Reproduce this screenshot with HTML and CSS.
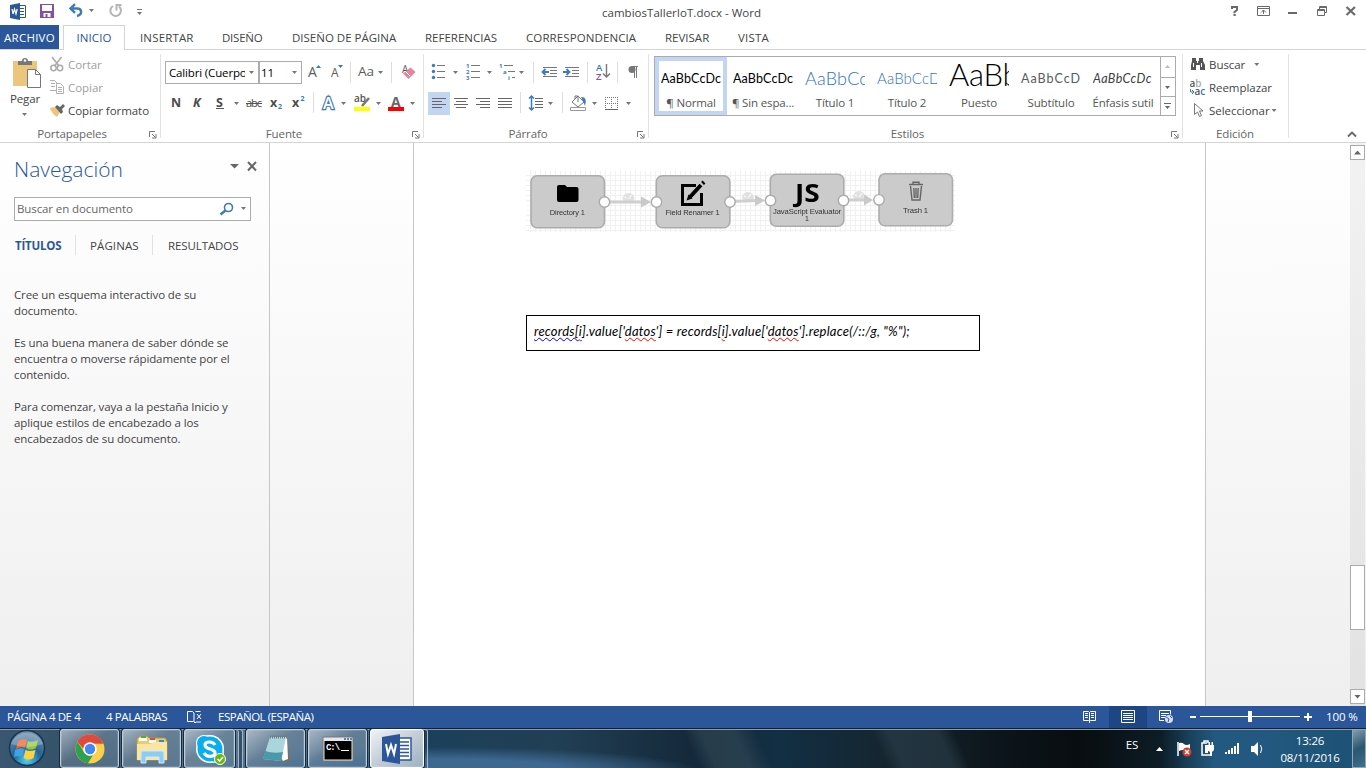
FILE: index.html
```html
<!DOCTYPE html>
<html lang="es">
<head>
<meta charset="utf-8">
<title>cambiosTallerIoT.docx - Word</title>
<link rel="stylesheet" href="styles.css">
</head>
<body>
<header class="titlebar">
  <svg class="quick" width="150" height="25" viewBox="0 0 150 25">
    <path fill="#2b579a" d="M10 5l10-2v17l-10-2z"/><path fill="none" stroke="#2b579a" d="M20 5.500h5.500v12H20M20 8.500h4M20 11.500h4M20 14.500h4"/><path fill="none" stroke="#fff" stroke-width="1.200" d="M12 9l1 5 1.500-5L16 14l1.200-5"/>
    <path fill="#8551a5" d="M40 4h14v14H40z"/><path fill="#fff" d="M42 5h10v6H42zM43.500 13h7v4h-3v-3h-2v3h-2z"/>
    <path fill="none" stroke="#3e79b8" stroke-width="2.400" d="M71 8.500h6c5 0 6 6 0 7.500M75 4.200L70.500 8.500l4.500 4.300"/>
    <path fill="#777" d="M89 9h5l-2.500 3zM137 12h5l-2.500 3z"/><path stroke="#777" d="M137 9.500h5"/>
    <path fill="none" stroke="#b4b4b4" stroke-width="2" d="M113 6a5.300 5.300 0 1 0 6 .5M116.500 10.500V5h5"/>
  </svg>
  <h1 class="doc-title">cambiosTallerIoT.docx - Word</h1>
  <svg class="winbtns" width="146" height="25" viewBox="1220 0 146 25">
    <path fill="none" stroke="#6a6a6a" stroke-width="2" d="M1232 9V7h5v3l-2.500 2v1.200M1233.500 15h2.200"/>
    <path fill="none" stroke="#6a6a6a" d="M1257.500 6.500h12v9h-12zM1257 8.500h13M1263.500 14v-4M1261 12.500l2.500-2.500 2.500 2.500"/>
    <path stroke="#6a6a6a" stroke-width="2" d="M1288 13h9"/>
    <path fill="none" stroke="#6a6a6a" d="M1317.500 9.500h7v6h-7zM1317 10.500h8M1319.500 9V6.500h7v6H1325M1319 7.500h8"/>
    <path stroke="#6a6a6a" stroke-width="2.200" d="M1346.500 7l8.500 8M1355 7l-8.500 8"/>
  </svg>
</header>
<nav class="tabs">
  <span class="tab file">ARCHIVO</span><span class="tab active">INICIO</span><span class="tab t1">INSERTAR</span><span class="tab t2">DISEÑO</span><span class="tab t3">DISEÑO DE PÁGINA</span><span class="tab t4">REFERENCIAS</span><span class="tab t5">CORRESPONDENCIA</span><span class="tab t6">REVISAR</span><span class="tab t7">VISTA</span>
</nav>
<section class="ribbon">
  <div class="group clip">
    <div class="gbody">
      <div class="paste">
        <svg width="50" height="42" viewBox="0 50 50 42"><path fill="#edc67e" d="M13 61h24v25H13z"/><path fill="#777" d="M18 65v-4h4a3 3 0 0 1 6 0h4v4z"/><circle cx="25" cy="60.500" r="1.200" fill="#fff"/><path fill="#fff" stroke="#777" d="M27.500 69.500h8l5 5v13h-13z"/><path fill="none" stroke="#777" d="M35.500 69.500v5h5"/></svg>
        <span>Pegar</span>
        <svg width="50" height="12" viewBox="0 106 50 12"><path fill="#777" d="M22 113h5l-2.500 3z"/></svg>
      </div>
      <div class="stack">
        <div class="cmd dim"><svg width="18" height="22" viewBox="50 54 18 22"><g fill="none" stroke="#aaa" stroke-width="1.500"><circle cx="53.500" cy="68" r="2.700"/><circle cx="60" cy="68" r="2.700"/><path d="M52 57l7 9M61.500 57l-7 9"/></g></svg><span>Cortar</span></div>
        <div class="cmd dim"><svg width="18" height="22" viewBox="50 77 18 22"><path fill="none" stroke="#b0b0b0" d="M56 90.500h-6.500v-10h5l3 3M51 83.500h4M51 86.500h4"/><path fill="#fff" stroke="#b0b0b0" d="M56.500 83.500h4l3 3v7h-7zM58 87.500h4M58 89.500h4M58 91.500h4"/></svg><span>Copiar</span></div>
        <div class="cmd"><svg width="18" height="22" viewBox="50 100 18 22"><path fill="#edc67e" d="M50 108l5-1 5 5-3 5c-2-1-6-5-7-9z"/><path fill="#666" d="M55 107l2-2 3 2 3-3 2 2-3 3 1 3-2 2z"/></svg><span>Copiar formato</span></div>
      </div>
    </div>
    <div class="glabel"><span>Portapapeles</span><svg class="launch" width="8" height="8"><path fill="none" stroke="#777" d="M.5 6V.5H6M3 3l3.500 3.500M7 3v4H3"/></svg></div>
  </div>
  <div class="group font">
    <div class="gbody rows">
      <div class="row">
        <div class="combo family"><span>Calibri (Cuerpo)</span><i class="caret"></i></div><div class="combo size"><span>11</span><i class="caret"></i></div>
        <svg width="121" height="23" viewBox="302 61 121 23">
          <g font-family="Open Sans, sans-serif" fill="#5c5c5c"><text x="308" y="77" font-size="14">A</text><text x="331" y="77" font-size="12">A</text><text x="358" y="76" font-size="13" textLength="16" lengthAdjust="spacingAndGlyphs">Aa</text><text x="402" y="73" font-size="10">A</text></g>
          <path fill="#3e79b8" d="M316 68l2.500-3 2.500 3zM338 65h5l-2.500 3z"/><path stroke="#ddd" d="M350.500 62v21M391.500 62v21"/><path fill="#777" d="M378 71h5l-2.500 3z"/><path fill="#e8839b" d="M403 73.500l7.500-6 5 4.500-7 7z"/><path stroke="#fff" d="M405 71l5 5"/>
        </svg>
      </div>
      <div class="row">
        <svg width="258" height="24" viewBox="165 91 258 24">
          <g font-family="Open Sans, sans-serif" fill="#4c4c4c" font-weight="700" font-size="12.500"><text x="171" y="107" textLength="10" lengthAdjust="spacingAndGlyphs">N</text><text x="193" y="107" font-style="italic">K</text><text x="216" y="107">S</text><text x="246" y="107" font-size="11" font-weight="400" textLength="16">abc</text><text x="270" y="107">x</text><text x="292" y="107">x</text></g>
          <g font-family="Open Sans, sans-serif" fill="#3e79b8" font-weight="700" font-size="7"><text x="278" y="109">2</text><text x="300.500" y="101">2</text></g>
          <path stroke="#555" d="M216 108.500h8M246 103.500h16"/><path fill="#777" d="M234 102h5l-2.500 3zM341 102h5l-2.500 3zM376 102h5l-2.500 3zM410 102h5l-2.500 3z"/>
          <path stroke="#ddd" d="M313.500 92v21"/>
          <g font-family="Open Sans, sans-serif" font-size="16" font-weight="600"><text x="323" y="109" fill="#fff" stroke="#3e79b8" stroke-width="2.400" paint-order="stroke">A</text></g>
          <text x="354" y="102" font-family="Open Sans, sans-serif" font-size="10" font-weight="600" fill="#555">ab</text><path stroke="#777" stroke-width="2.500" d="M369 98l-7 8"/><path fill="#ff0" d="M354 107h16v4h-16z"/>
          <text x="391" y="107" font-family="Open Sans, sans-serif" font-size="14" font-weight="700" fill="#666">A</text><path fill="red" d="M388 107h16v4h-16z"/>
        </svg>
      </div>
    </div>
    <div class="glabel"><span>Fuente</span><svg class="launch" width="8" height="8"><path fill="none" stroke="#777" d="M.5 6V.5H6M3 3l3.500 3.500M7 3v4H3"/></svg></div>
  </div>
  <div class="group para">
    <div class="gbody rows">
      <div class="row">
        <svg width="224" height="23" viewBox="424 61 224 23">
          <g fill="#3e79b8"><circle cx="433.500" cy="65.500" r="1.700"/><circle cx="433.500" cy="71.500" r="1.700"/><circle cx="433.500" cy="77.500" r="1.700"/></g>
          <path stroke="#777" d="M437 65.500h8M437 71.500h8M437 77.500h8M471 65.500h9M471 71.500h9M471 77.500h9M504 65.500h9M508 71.500h7M512 77.500h3"/>
          <g fill="#3e79b8" font-family="Open Sans, sans-serif" font-size="6" font-weight="700"><text x="466" y="67.500">1</text><text x="466" y="73.500">2</text><text x="466" y="79.500">3</text><text x="499" y="67.500">1</text><text x="503" y="73.500">a</text><text x="508" y="79.500">i</text></g>
          <path fill="#777" d="M453 71h5l-2.500 3zM487 71h5l-2.500 3zM519 71h5l-2.500 3z"/><path stroke="#ddd" d="M533.500 62v21M587.500 62v21M617.500 62v21"/>
          <path stroke="#777" d="M543 67.500h14M550 70.500h7M550 73.500h7M543 76.500h14M565 67.500h14M572 70.500h7M572 73.500h7M565 76.500h14"/><path fill="none" stroke="#3e79b8" stroke-width="1.800" d="M549 72h-6M545.500 69l-3 3 3 3M563 72h6M566.500 69l3 3-3 3"/>
          <g font-family="Open Sans, sans-serif" font-size="9.500" font-weight="600"><text x="596" y="71" fill="#3e79b8">A</text><text x="596" y="79.500" fill="#8551a5">Z</text></g><path fill="none" stroke="#777" stroke-width="1.400" d="M606.500 64v13M603 73.500l3.500 3.500 3.500-3.500"/>
          <path fill="none" stroke="#777" d="M632 66.500h6M634.500 67v11M636.500 67v11"/><circle cx="632" cy="69.500" r="3.500" fill="#777"/>
        </svg>
      </div>
      <div class="row">
        <svg width="224" height="24" viewBox="424 91 224 24">
          <path fill="#c2d5f2" d="M428 92h22v23h-22z"/>
          <path stroke="#666" d="M432 98.500h14M432 101.500h10M432 104.500h14M432 107.500h10M454 98.500h14M456 101.500h10M454 104.500h14M456 107.500h10M476 98.500h14M480 101.500h10M476 104.500h14M480 107.500h10M498 98.500h14M498 101.500h14M498 104.500h14M498 107.500h14M535 98.500h8M535 101.500h8M535 104.500h8M535 107.500h8"/>
          <path stroke="#ddd" d="M520.500 92v21M562.500 92v21"/><path fill="none" stroke="#3e79b8" stroke-width="1.500" d="M531.500 96v14M529 98.500l2.500-2.500 2.500 2.500M529 107.500l2.500 2.500 2.500-2.500"/>
          <path fill="#777" d="M548 102h5l-2.500 3zM592 102h5l-2.500 3zM626 102h5l-2.500 3z"/>
          <path fill="#fff" stroke="#777" d="M572 102l6-6 6 6-6 5zM575 99v-3h3v6"/><path fill="#3e79b8" d="M581 97c6 0 5 5 4 9l-2-5z"/><path fill="#fff" stroke="#999" d="M570.500 107.500h15v3h-15z"/>
          <path fill="none" stroke="#777" stroke-dasharray="1 1" d="M605.500 97v12M611.500 97v12M617.500 97v12M605 97.500h13M605 103.500h13"/><path stroke="#666" d="M605 109.500h13"/>
        </svg>
      </div>
    </div>
    <div class="glabel"><span>Párrafo</span><svg class="launch" width="8" height="8"><path fill="none" stroke="#777" d="M.5 6V.5H6M3 3l3.500 3.500M7 3v4H3"/></svg></div>
  </div>
  <div class="group styles">
    <div class="gbody">
      <div class="gallery">
        <div class="card sel"><b>AaBbCcDc</b><span>¶ Normal</span></div>
        <div class="card"><b>AaBbCcDc</b><span>¶ Sin espa...</span></div>
        <div class="card"><b class="h1">AaBbCc</b><span>Título 1</span></div>
        <div class="card"><b class="h2">AaBbCcD</b><span>Título 2</span></div>
        <div class="card"><b class="title">AaBb</b><span>Puesto</span></div>
        <div class="card"><b class="sub">AaBbCcD</b><span>Subtítulo</span></div>
        <div class="card"><b class="em">AaBbCcDc</b><span>Énfasis sutil</span></div>
        <svg class="gscroll" width="15" height="58" viewBox="1160 57 15 58"><path stroke="#ababab" d="M1160.500 57v58M1160 77.500h15M1160 96.500h15"/><path fill="#bbb" d="M1165 68h5l-2.500-3z"/><path fill="#666" d="M1165 86h5l-2.500 3zM1165 106h5l-2.500 3z"/><path stroke="#666" d="M1164 103.500h7"/></svg>
      </div>
    </div>
    <div class="glabel"><span>Estilos</span><svg class="launch" width="8" height="8"><path fill="none" stroke="#777" d="M.5 6V.5H6M3 3l3.500 3.500M7 3v4H3"/></svg></div>
  </div>
  <div class="group edit">
    <div class="gbody"><div class="stack">
      <div class="cmd"><svg width="19" height="22" viewBox="1190 54 19 22"><path fill="#555" d="M1192 58h4v3h3v-3h4v3l2 4v5h-5v-5h-4v5h-5v-5l1-4z"/><path stroke="#fff" d="M1193.500 63v4M1201.500 63v4M1197.500 60v3"/></svg><span>Buscar</span><i class="caret wide"></i></div>
      <div class="cmd"><svg width="19" height="22" viewBox="1190 77 19 22"><g font-family="Open Sans, sans-serif" font-size="10" font-weight="600"><text x="1189.500" y="87" fill="#555">a<tspan fill="#aaa">b</tspan></text><text x="1194.500" y="95" fill="#555">a<tspan fill="#3e79b8">c</tspan></text></g><path fill="none" stroke="#3e79b8" d="M1190.500 89v3h3.500M1192 90l2 2-2 2"/></svg><span>Reemplazar</span></div>
      <div class="cmd"><svg width="19" height="22" viewBox="1190 100 19 22"><path fill="#fff" stroke="#777" d="M1194.500 103.500v11l3-2.500 2 4.500 2-1-2-4.500h3.500z"/></svg><span>Seleccionar</span><i class="caret"></i></div>
    </div></div>
    <div class="glabel"><span>Edición</span></div>
  </div>
  <svg class="collapse" width="12" height="8"><path fill="none" stroke="#666" stroke-width="1.800" d="M2 6.500L6 2.500l4 4"/></svg>
</section>
<main class="work">
  <aside class="navpane">
    <div class="navhead"><h2>Navegación</h2><svg width="27" height="12" viewBox="230 160 27 12"><path fill="#666" d="M230 164h9l-4.500 4.500z"/><path stroke="#666" stroke-width="2" d="M248 162l8 8.500M256 162l-8 8.500"/></svg></div>
    <div class="search"><span>Buscar en documento</span><svg width="32" height="20" viewBox="218 199 32 20"><circle cx="228.500" cy="207.500" r="4" fill="none" stroke="#3e79b8" stroke-width="1.600"/><path stroke="#3e79b8" stroke-width="2.400" d="M225.500 210.500l-5 4"/><path fill="#777" d="M241 207h5l-2.500 3z"/></svg></div>
    <div class="navtabs"><span class="on">TÍTULOS</span><span class="mid">PÁGINAS</span><span>RESULTADOS</span></div>
    <div class="help"><p>Cree un esquema interactivo de su<br>documento.</p><p>Es una buena manera de saber dónde se<br>encuentra o moverse rápidamente por el<br>contenido.</p><p>Para comenzar, vaya a la pestaña Inicio y<br>aplique estilos de encabezado a los<br>encabezados de su documento.</p></div>
  </aside>
  <section class="canvas">
    <article class="page">
      <svg class="pipeline" width="430" height="62" viewBox="526 170 430 62">
        <defs><pattern id="grid" width="5" height="5" patternUnits="userSpaceOnUse"><path fill="none" stroke="#f1f1f1" d="M.5 0v5M0 .5h5"/></pattern>
        <g id="gauge"><path fill="#e3e0e0" d="M-6 2a6 6 0 1 1 12 0l-2 3h-8z"/><path stroke="#fff" d="M0 2l3-4M-4 0l2 1"/></g></defs>
        <path fill="url(#grid)" d="M526 171h429v61H526z"/>
        <use href="#gauge" x="628.500" y="197"/><use href="#gauge" x="748" y="196"/><use href="#gauge" x="859" y="195"/>
        <g stroke="#cfcfcf" stroke-width="2.800"><path d="M605 202h40M730 201.500l28-1M844 200h22"/></g>
        <g fill="#c9c9c9"><path d="M641 196.500l10 5.500-10 5.500zM755 195l10 5.500-10 5.500zM864 194.500l9 5.500-9 5.500z"/></g>
        <g fill="#cbcbcb" stroke="#acacac" stroke-width="1.600"><rect x="531" y="175.800" width="73.500" height="52" rx="6"/><rect x="656.300" y="175.800" width="73.500" height="52" rx="6"/><rect x="770.300" y="174.300" width="73.500" height="52" rx="6"/><rect x="879" y="173.800" width="73.500" height="52" rx="6"/></g>
        <g fill="#fff" stroke="#aaa" stroke-width="1.400"><circle cx="604.500" cy="202" r="5.200"/><circle cx="656.500" cy="202" r="5.200"/><circle cx="730" cy="202" r="5.200"/><circle cx="770.500" cy="200.500" r="5.200"/><circle cx="843.500" cy="200.500" r="5.200"/><circle cx="879" cy="199.800" r="5.200"/></g>
        <path d="M557 187a2 2 0 0 1 2-2h6l2 2h10a2 2 0 0 1 1.500 2v11a2 2 0 0 1-2 2h-17.500a2 2 0 0 1-2-2z"/>
        <path fill="none" stroke="#000" stroke-width="3" d="M696 185.500h-13.500v19h19V193"/><path stroke="#000" stroke-width="4" d="M690 197l11-12M702.500 183.500l1.500-1.500"/><path d="M686.500 200.500l2-6 4 4z"/>
        <text x="795" y="201.500" font-family="Open Sans, sans-serif" font-size="25" font-weight="700" textLength="24.500" lengthAdjust="spacingAndGlyphs">JS</text>
        <path fill="none" stroke="#666" stroke-width="1.400" d="M909 184.500h14M913 184v-1.800h6v1.800M910.500 186l1.500 14h8l1.500-14M913.800 188l.5 10M916 188v10M918.200 188l-.5 10"/>
        <g font-family="Liberation Sans, sans-serif" font-size="7" fill="#333" text-anchor="middle"><text x="567.300" y="214.500" textLength="35" lengthAdjust="spacingAndGlyphs">Directory 1</text><text x="692.500" y="214.500" textLength="54" lengthAdjust="spacingAndGlyphs">Field Renamer 1</text><text x="807" y="213.500" textLength="68" lengthAdjust="spacingAndGlyphs">JavaScript Evaluator</text><text x="807" y="221">1</text><text x="915.500" y="213" textLength="25" lengthAdjust="spacingAndGlyphs">Trash 1</text></g>
      </svg>
      <div class="codebox"><code><u class="gram">records[</u><u>i</u>].value['<u>datos</u>'] = records[<u>i</u>].value['<u>datos</u>'].replace(/::/g, "%");</code></div>
    </article>
  </section>
  <div class="scroll"><span class="sb"><i class="up"></i></span><span class="thumb"></span><span class="sb end"><i class="caret"></i></span></div>
</main>
<footer class="status">
  <span class="s1">PÁGINA 4 DE 4</span><span class="s2">4 PALABRAS</span>
  <svg class="proof" width="16" height="14" viewBox="187 710 16 14"><path fill="none" stroke="#fff" d="M193.500 721.500h-6v-10h5l1.500 1.500v9l1 1 1-1h5M195.500 711.500h5M197 714l4 5M201 714l-4 5"/></svg><span class="s3">ESPAÑOL (ESPAÑA)</span>
  <svg class="views" width="240" height="22" viewBox="1080 706 240 22"><path fill="#1e4684" d="M1109 706h38v22h-38z"/>
    <path fill="none" stroke="#fff" d="M1083.500 711.500h5l1 1 1-1h5v9h-5l-1 1-1-1h-5zM1089.500 712v11M1085 713.500h3M1085 715.500h3M1085 717.500h3M1091 713.500h3M1091 715.500h3M1091 717.500h3M1121.500 710.500h13v12h-13zM1123 713.500h10M1123 715.500h10M1123 717.500h10M1123 719.500h10M1164 720.500h-4.500v-10h11v4M1161 713.500h8M1161 715.500h5M1161 717.500h4"/><circle cx="1169" cy="719" r="4" fill="#d7e0ee"/><path fill="none" stroke="#2b579a" d="M1166 717l3 2-1 3M1170 716l2 2"/>
    <path stroke="#fff" stroke-width="2" d="M1190 717h6M1304 717h8M1308 713v8"/><path stroke="#fff" d="M1200 716.500h100"/><path fill="#fff" d="M1248 711h4v11h-4z"/></svg>
  <span class="pct">100 %</span>
</footer>
<div class="taskbar">
  <div class="start"><svg width="40" height="38" viewBox="7 729 40 38"><defs><radialGradient id="orb" cx=".5" cy=".85" r=".8"><stop offset="0" stop-color="#52d0f5"/><stop offset=".5" stop-color="#216596"/><stop offset="1" stop-color="#6f90aa"/></radialGradient></defs><circle cx="27" cy="748" r="17.500" fill="url(#orb)" stroke="#173652" stroke-width="1.500"/><path fill="#ef632c" d="M18 741q5-3 9-1l-2 8q-4-2-9 1z"/><path fill="#96c83d" d="M28 741q4 2 10-1l-2 8q-5 3-10 0z"/><path fill="#3fa3e4" d="M15 750q5-3 9-1l-2 8q-4-2-8 0z"/><path fill="#ffd13b" d="M25.500 750q4 2 10 0l-2 8q-5 3-10 0z"/><path fill="#fff" opacity=".25" d="M11 744a17 17 0 0 1 32 0q-16 6-32 0z"/></svg></div>
  <div class="app"><svg width="32" height="32" viewBox="0 0 32 32"><circle cx="16" cy="16" r="14.500" fill="#fdd04a"/><path fill="#e04a3c" d="M3.500 8.700a14.500 14.500 0 0 1 26 2H16a6 6 0 0 0-6 6z"/><path fill="#2ea14f" d="M3.500 8.700L10 19a6.500 6.500 0 0 0 9 3l-5 8.300A14.500 14.500 0 0 1 3.500 8.700z"/><circle cx="16" cy="16" r="6.800" fill="#fff"/><circle cx="16" cy="16" r="5.200" fill="#4688f1"/></svg></div>
  <div class="app"><svg width="34" height="32" viewBox="0 0 34 32"><path fill="#e9cb75" stroke="#b9963f" d="M2 6l3-3h7l2 2h16l2 3v19H2z"/><path fill="#fff" d="M4 5h8v3H4zM14 7h7v3h-7zM23 9h7v2h-7z"/><path fill="#4bad43" d="M6 3h5v2H6z"/><path fill="#d94b3a" d="M15 5h5v2h-5z"/><path fill="#3b85d0" d="M24 7h5v2h-5z"/><path fill="#f8e7a4" d="M2 11h14l2-2h14v18H2z"/><path fill="#8fcdf0" stroke="#c9eaff" d="M6 30V20q0-2 2-2h19q2 0 2 2v10h-5v-6H11v6z"/></svg></div>
  <div class="app multi short"><svg width="32" height="32" viewBox="0 0 32 32"><circle cx="10" cy="10" r="8" fill="#fff"/><circle cx="22" cy="22" r="8" fill="#fff"/><circle cx="16" cy="16" r="14" fill="#fff"/><circle cx="10" cy="10" r="7" fill="#0aaeee"/><circle cx="22" cy="22" r="7" fill="#0aaeee"/><circle cx="16" cy="16" r="12.500" fill="#0aaeee"/><path fill="none" stroke="#fff" stroke-width="3.200" d="M21 12c-2-4-10-4-10 0 0 5 10 3 10 8 0 4-8 5-11 0"/><circle cx="26" cy="26" r="5.500" fill="#6bb411" stroke="#fff"/><path fill="none" stroke="#fff" stroke-width="1.600" d="M23.500 26l2 2 3.500-4"/></svg></div>
  <div class="app"><svg width="34" height="32" viewBox="0 0 34 32"><path fill="#776f5a" d="M28 5l3 24-9-1z"/><path fill="#fff" d="M11 4h17l1 22-5 2z"/><path fill="#a8d6dc" d="M11 4h16l-5 24-18-2z"/><path fill="#4b98aa" d="M6 18q9 3 18 1l-2 9-18-2z"/><path stroke="#777" stroke-dasharray="1 1" stroke-width="3" d="M11 4h17"/></svg></div>
  <div class="app"><svg width="32" height="28" viewBox="0 0 32 28"><path fill="#e6e6e6" stroke="#777" d="M1 2h30v24H1z"/><path d="M2.500 6h27v18.500h-27z"/><path stroke="#5b7fba" stroke-dasharray="2 1" stroke-width="2" d="M22 4h8"/><text x="4" y="15" font-size="9" font-weight="700" font-family="Liberation Mono, monospace" fill="#fff" textLength="14">C:\</text><path stroke="#fff" d="M19 15.500h8"/></svg></div>
  <div class="app multi now"><svg width="32" height="32" viewBox="0 0 32 32"><path fill="#fff" stroke="#2b579a" stroke-width="1.500" d="M17 5h13v22H17z"/><path stroke="#2b579a" stroke-width="1.500" d="M19 9h9M19 12.500h9M19 16h9M19 19.500h9M19 23h9"/><path fill="#2b579a" d="M1 4l18-3v30L1 28z"/><path fill="none" stroke="#fff" stroke-width="2" d="M5 11l2 10 3-9 3 9 2-10"/></svg></div>
  <div class="tray"><span class="lang">ES</span>
    <svg width="120" height="38" viewBox="1150 729 120 38"><path fill="#fff" d="M1156 751h7l-3.500-4z"/><path fill="none" stroke="#fff" stroke-width="1.500" d="M1178 742v14"/><path fill="#fff" d="M1179 743q3-1 5 1t6 0v7q-3 2-5 0t-6 0z"/><circle cx="1187" cy="752" r="4.500" fill="#d53a30"/><path stroke="#fff" stroke-width="1.500" d="M1185 750l4 4M1189 750l-4 4"/>
    <path fill="none" stroke="#fff" stroke-width="1.500" d="M1207 743h-5v12h8M1204 743v-2h4v2"/><path fill="#fff" d="M1205 745h3v8h-3zM1207 745h7v5l-2 2v4h-2v-4l-3-2zM1208.500 742h1.500v3h-1.500zM1211.500 742h1.500v3h-1.500zM1225 752h2v2h-2zM1228 750h2v4h-2zM1231 748h2v6h-2zM1234 746h2v8h-2zM1237 743h2v11h-2zM1251 746h3l4-4v14l-4-4h-3z"/><path fill="none" stroke="#fff" d="M1260.500 745q2.500 4 0 8"/></svg>
    <div class="clock">13:26<br>08/11/2016</div></div>
  <div class="desk"></div>
</div>
</body>
</html>
```
FILE: styles.css
```css
* { box-sizing: border-box; }
body { margin: 0; width: 1366px; height: 768px; overflow: hidden; display: flex; flex-direction: column; background: #fff; color: #444; font: 11.5px/16px "Open Sans", "Noto Sans", sans-serif; letter-spacing: -.1px; }
h1, h2, p { margin: 0; font-weight: 400; }
svg { display: block; flex: none; }
span { white-space: nowrap; }
.titlebar { height: 25px; display: flex; justify-content: space-between; }
.doc-title { flex: 1; padding: 5px 0 0 452px; font-size: 11.5px; line-height: 16px; letter-spacing: .02px; }
.tabs { height: 25px; display: flex; line-height: 25px; box-shadow: inset 0 -1px #d4d4d4; letter-spacing: -.22px; }
.tab { height: 25px; }
.file { width: 59px; height: 24px; background: #2b579a; color: #fff; text-align: center; letter-spacing: .25px; }
.active { width: 62px; margin: 0 15px 0 4px; border: 1px solid #d4d4d4; border-bottom: 0; background: #fff; color: #2b579a; text-align: center; line-height: 24px; letter-spacing: .1px; }
.t1 { width: 82px; letter-spacing: .15px; } .t2 { width: 70px; } .t3 { width: 133px; letter-spacing: 0; } .t4 { width: 101px; letter-spacing: 0; } .t5 { width: 139px; letter-spacing: .1px; } .t6 { width: 73px; letter-spacing: 0; } .t7 { letter-spacing: .2px; }
.ribbon { height: 93px; display: flex; border-bottom: 1px solid #d4d4d4; }
.group { display: flex; flex-direction: column; background: linear-gradient(#e1e1e1, #e1e1e1) right 4px / 1px 84px no-repeat; }
.clip { width: 161px; } .font { width: 263px; } .para { width: 225px; } .styles { width: 534px; } .edit { width: 106px; }
.gbody { height: 76px; display: flex; }
.glabel { height: 16px; display: flex; align-items: center; justify-content: center; color: #666; position: relative; letter-spacing: -.1px; }
.clip .glabel, .font .glabel, .para .glabel, .styles .glabel { padding-right: 17px; }
.launch { position: absolute; right: 4px; top: 5px; }
.paste { width: 50px; display: flex; flex-direction: column; align-items: center; line-height: 14px; }
.stack { padding-top: 3px; }
.cmd { height: 23px; display: flex; align-items: center; line-height: 22px; letter-spacing: -.05px; }
.dim { color: #a0a0a0; }
.rows { flex-direction: column; padding: 11px 0 0 4px; gap: 7px; }
.para .rows { padding-left: 0; }
.row { display: flex; }
.combo { height: 23px; border: 1px solid #ababab; display: flex; align-items: center; justify-content: space-between; padding: 0 4px 0 3px; color: #000; }
.family { width: 94px; letter-spacing: -.15px; } .family span { width: 76px; overflow: hidden; }
.size { width: 43px; padding-left: 1px; }
.caret { width: 5px; height: 3px; background: #777; clip-path: polygon(0 0, 100% 0, 50% 100%); margin-left: 2px; flex: none; }
.wide { margin-left: 9px; }
.gallery { width: 522px; height: 60px; margin: 6px 0 0 5px; border: 1px solid #ababab; display: flex; }
.card { width: 72px; height: 58px; display: flex; flex-direction: column; align-items: center; padding-top: 6px; flex: none; color: #555; }
.sel { box-shadow: inset 0 0 0 4px #c2d5f2; }
.card b { width: 60px; height: 27px; overflow: hidden; font: 400 12.5px/31px Lato, sans-serif; color: #000; white-space: nowrap; letter-spacing: .15px; }
.card span { line-height: 14px; margin-top: 6px; letter-spacing: -.15px; }
.card .h1 { font-size: 18px; font-weight: 300; color: #2e74b5; letter-spacing: .2px; }
.card .h2 { font-size: 15px; font-weight: 300; color: #2e74b5; letter-spacing: .1px; }
.card .title { font-size: 31px; font-weight: 300; line-height: 22px; letter-spacing: -.3px; }
.card .sub { color: #5a5a5a; letter-spacing: 1px; } .card .em { font-style: italic; color: #404040; letter-spacing: .4px; }
.gscroll { margin-left: 1px; }
.edit .stack { padding-left: 7px; }
.edit .glabel { padding-right: 2px; }
.collapse { margin: 80px 0 0 57px; }
.work { height: 563px; display: flex; background: linear-gradient(#fff, #efefef); }
.navpane { width: 270px; border-right: 1px solid #c6c6c6; padding: 13px 13px 0 14px; }
.navhead { height: 41px; display: flex; justify-content: space-between; }
.navhead h2 { font-size: 21px; line-height: 26px; font-weight: 300; color: #2b579a; letter-spacing: 0; }
.navhead svg { margin: 4px -1px 0 0; }
.search { width: 237px; height: 24px; border: 1px solid #ababab; background: #fff; display: flex; align-items: center; justify-content: space-between; padding: 0 0 0 2px; color: #666; letter-spacing: -.1px; }
.navtabs { height: 20px; margin-top: 14px; display: flex; line-height: 22px; }
.navtabs .on { width: 61px; padding-left: 1px; color: #2b579a; font-weight: 700; letter-spacing: -.2px; }
.navtabs .mid { width: 78px; padding-left: 14px; margin-right: 15px; border: 1px solid #e1e1e1; border-width: 0 1px; letter-spacing: .1px; }
.help { margin-top: 32px; letter-spacing: -.12px; } .help p { margin-bottom: 16px; white-space: nowrap; }
.canvas { width: 1080px; padding-left: 143px; }
.page { width: 793px; height: 563px; background: #fff; border: 1px solid #c6c6c6; border-width: 0 1px; padding: 27px 0 0 112px; }
.pipeline { filter: blur(.5px); }
.codebox { width: 454px; height: 36px; margin-top: 83px; border: 1px solid #000; padding-left: 7px; color: #000; }
.codebox code { font: italic 13px/30px Lato, sans-serif; white-space: nowrap; letter-spacing: .22px; }
.codebox u { text-decoration: underline wavy red .8px; text-underline-offset: 1px; text-decoration-skip-ink: none; }
.codebox .gram { text-decoration-color: blue; }
.scroll { width: 15px; background: rgba(0,0,0,.05); padding-top: 2px; display: flex; flex-direction: column; }
.sb { height: 15px; border: 1px solid #ababab; background: #fff; display: flex; align-items: center; justify-content: center; }
.sb i { width: 7px; height: 4px; margin: 0; background: #666; } .up { clip-path: polygon(50% 0, 100% 100%, 0 100%); }
.thumb { height: 65px; margin: 405px 0 59px; border: 1px solid #ababab; background: #fff; }
.status { height: 22px; background: #2b579a; color: #fff; display: flex; align-items: center; padding-left: 7px; line-height: 22px; letter-spacing: -.4px; }
.s1 { width: 99px; } .s2 { width: 81px; } .s3 { margin-left: 15px; flex: 1; letter-spacing: -.48px; } .pct { width: 40px; margin-right: 6px; padding-left: 6px; letter-spacing: -.1px; }
.taskbar { height: 40px; border-top: 1px solid #10202e; display: flex; box-shadow: inset 0 1px #8c9cab; background: radial-gradient(ellipse 260px 24px at 440px 42px, #3e688f 0, #3e688f 50%, transparent), linear-gradient(65deg, transparent 635px, #3a4f5a80 650px, #3a4f5a80 680px, transparent 700px, transparent 805px, #2c404c99 820px, #2c404c99 865px, transparent 880px), linear-gradient(90deg, #3b5670 0, #36536c 60px, #5a7891 200px, #4b6d8a 380px, #1c405b 430px, #213f54 560px, #15293b 690px, #122f44 780px, #15252f 890px, #0c151b 1000px, #080d10 1080px, #0d1c25 1160px, #1a415c 1190px, #235980 1215px, #235980 1260px, #1c5174 1366px); color: #fff; }
.start { width: 60px; padding-left: 7px; }
.app { width: 59px; height: 39px; margin-right: 3px; border: 1px solid #c0ccd6; border-radius: 3px; background: linear-gradient(145deg, #cdd6dfb0, #8395a666 45%, #68869c50); display: flex; align-items: center; justify-content: center; box-shadow: inset 0 0 0 1px #ffffff20, 0 0 0 1px #152c40; }
.short { width: 51px; margin-right: 11px; }
.multi { position: relative; }
.multi::after { content: ""; position: absolute; left: 100%; top: -1px; width: 4px; height: 39px; border: 1px solid #a7b6c3; border-left: 0; border-radius: 0 3px 3px 0; }
.short::after { width: 8px; box-shadow: inset -3px 0 #34506a, inset -4px 0 #a7b6c3; }
.now { width: 54px; background: linear-gradient(145deg, #f0f2f5, #c3cdd7 50%, #9db0c1); border-color: #fff; }
.tray { margin-left: auto; display: flex; letter-spacing: -.2px; }
.lang { padding: 8px 12px 0 0; }
.clock { width: 80px; text-align: center; padding: 3px 0; line-height: 17px; }
.desk { width: 14px; height: 39px; margin-left: 2px; border: 1px solid #8ca8b9; background: linear-gradient(150deg, #839eaf, #2c566f 50%, #3e708d); }
```
